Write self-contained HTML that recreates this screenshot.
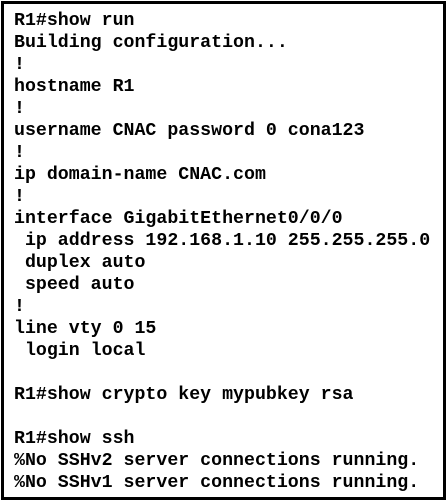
<!DOCTYPE html><html><head><style>
html,body{margin:0;padding:0;background:#fff;width:447px;height:502px;overflow:hidden}
.b{position:absolute;left:1px;top:1px;width:439px;height:493px;border:3px solid #000;}
pre{position:absolute;left:14px;top:10px;margin:0;font:bold 18.25px/22px "Liberation Mono",monospace;color:#000}
</style></head><body><div class="b"></div><pre>R1#show run
Building configuration...
!
hostname R1
!
username CNAC password 0 cona123
!
ip domain-name CNAC.com
!
interface GigabitEthernet0/0/0
 ip address 192.168.1.10 255.255.255.0
 duplex auto
 speed auto
!
line vty 0 15
 login local

R1#show crypto key mypubkey rsa

R1#show ssh
%No SSHv2 server connections running.
%No SSHv1 server connections running.</pre></body></html>
